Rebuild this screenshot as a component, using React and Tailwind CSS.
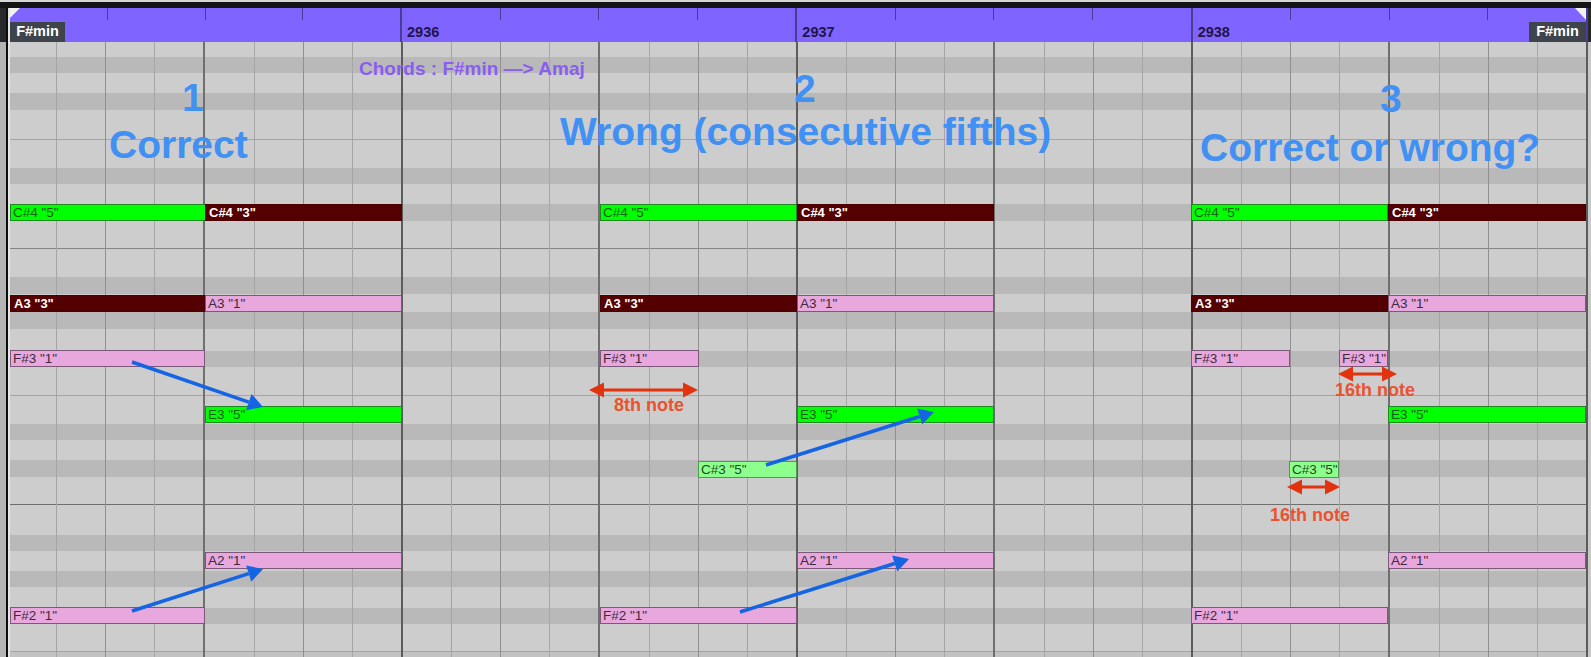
import React from "react";

const stripes = [
  "h-[15px] bg-[#cdcdcd]",
  "h-[16px] bg-[#b9b9b9]",
  "h-[20px] bg-[#cdcdcd]",
  "h-[17px] bg-[#b9b9b9]",
  "h-[30px] bg-[#cdcdcd] border-b border-b-[#a4a4a4]",
  "h-[28px] bg-[#cdcdcd]",
  "h-[16px] bg-[#b9b9b9]",
  "h-[20px] bg-[#cdcdcd]",
  "h-[17px] bg-[#b9b9b9]",
  "h-[28px] bg-[#cdcdcd] border-b border-b-[#858585]",
  "h-[28px] bg-[#cdcdcd]",
  "h-[17px] bg-[#b9b9b9]",
  "h-[18px] bg-[#cdcdcd]",
  "h-[17px] bg-[#b9b9b9]",
  "h-[22px] bg-[#cdcdcd]",
  "h-[16px] bg-[#b9b9b9]",
  "h-[29px] bg-[#cdcdcd] border-b border-b-[#a4a4a4]",
  "h-[28px] bg-[#cdcdcd]",
  "h-[16px] bg-[#b9b9b9]",
  "h-[20px] bg-[#cdcdcd]",
  "h-[17px] bg-[#b9b9b9]",
  "h-[28px] bg-[#cdcdcd] border-b border-b-[#6e6e6e]",
  "h-[30px] bg-[#cdcdcd]",
  "h-[16px] bg-[#b9b9b9]",
  "h-[20px] bg-[#cdcdcd]",
  "h-[16px] bg-[#b9b9b9]",
  "h-[21px] bg-[#cdcdcd]",
  "h-[16px] bg-[#b9b9b9]",
  "h-[28px] bg-[#cdcdcd] border-b border-b-[#a4a4a4]",
  "h-[5px] bg-[#c2c2c2]",
];

const eighth = "border-r border-r-[#a6a6a6]";
const quarter = "border-r border-r-[#909090]";
const half = "border-r border-r-[#6f6f6f]";
const afterHalf = "border-l border-l-[#6f6f6f] border-r border-r-[#a6a6a6]";
const bar = "border-r-2 border-r-[#5c5c5c]";
const barCells = [eighth, quarter, eighth, half, afterHalf, quarter, eighth, bar];

const green = "bg-[#00ff00] border-[#1f8a1f] text-[#156015] pl-[2px] text-[13.5px]";
const dark = "bg-[#550000] border-[#4a0000] text-white font-bold pl-[3px] text-[13px]";
const pink = "bg-[#e8a8de] border-[#7a5a78] text-[#3c2b3c] pl-[2px] text-[13.5px]";
const mint = "bg-[#8dff8d] border-[#4f9a4f] text-[#1c4c1c] pl-[2px] text-[13.5px]";

const notes = [
  ["C#4 \"5\"", green, "left-[0px] top-[162px] w-[196px]"],
  ["C#4 \"3\"", dark, "left-[195px] top-[162px] w-[197px]"],
  ["A3 \"3\"", dark, "left-[0px] top-[253px] w-[195px]"],
  ["A3 \"1\"", pink, "left-[195px] top-[253px] w-[197px]"],
  ["F#3 \"1\"", pink, "left-[0px] top-[308px] w-[195px]"],
  ["E3 \"5\"", green, "left-[195px] top-[364px] w-[197px]"],
  ["A2 \"1\"", pink, "left-[195px] top-[510px] w-[197px]"],
  ["F#2 \"1\"", pink, "left-[0px] top-[565px] w-[195px]"],

  ["C#4 \"5\"", green, "left-[590px] top-[162px] w-[197px]"],
  ["C#4 \"3\"", dark, "left-[787px] top-[162px] w-[197px]"],
  ["A3 \"3\"", dark, "left-[590px] top-[253px] w-[197px]"],
  ["A3 \"1\"", pink, "left-[787px] top-[253px] w-[197px]"],
  ["F#3 \"1\"", pink, "left-[590px] top-[308px] w-[99px]"],
  ["C#3 \"5\"", mint, "left-[688px] top-[419px] w-[99px]"],
  ["E3 \"5\"", green, "left-[787px] top-[364px] w-[197px]"],
  ["A2 \"1\"", pink, "left-[787px] top-[510px] w-[197px]"],
  ["F#2 \"1\"", pink, "left-[590px] top-[565px] w-[197px]"],

  ["C#4 \"5\"", green, "left-[1181px] top-[162px] w-[197px]"],
  ["C#4 \"3\"", dark, "left-[1378px] top-[162px] w-[198px]"],
  ["A3 \"3\"", dark, "left-[1181px] top-[253px] w-[197px]"],
  ["A3 \"1\"", pink, "left-[1378px] top-[253px] w-[198px]"],
  ["F#3 \"1\"", pink, "left-[1181px] top-[308px] w-[99px]"],
  ["F#3 \"1\"", pink, "left-[1329px] top-[308px] w-[49px]"],
  ["C#3 \"5\"", mint, "left-[1279px] top-[419px] w-[50px]"],
  ["E3 \"5\"", green, "left-[1378px] top-[364px] w-[198px]"],
  ["A2 \"1\"", pink, "left-[1378px] top-[510px] w-[198px]"],
  ["F#2 \"1\"", pink, "left-[1181px] top-[565px] w-[197px]"],
];

function head(x1, y1, x2, y2, len, half) {
  const d = Math.hypot(x2 - x1, y2 - y1);
  const ux = (x2 - x1) / d;
  const uy = (y2 - y1) / d;
  const bx = x2 - ux * len;
  const by = y2 - uy * len;
  return {
    bx,
    by,
    pts: `${x2},${y2} ${bx - uy * half},${by + ux * half} ${bx + uy * half},${by - ux * half}`,
  };
}

function BlueArrow({ x1, y1, x2, y2 }) {
  const h = head(x1, y1, x2, y2, 15, 8.5);
  return (
    <g>
      <line x1={x1} y1={y1} x2={h.bx} y2={h.by} stroke="#1464e4" strokeWidth="3.5" />
      <polygon points={h.pts} fill="#1464e4" />
    </g>
  );
}

function RedArrow({ x1, x2, y }) {
  return (
    <g fill="#e2330e">
      <polygon points={`${x1},${y} ${x1 + 15},${y - 7.5} ${x1 + 15},${y + 7.5}`} />
      <polygon points={`${x2},${y} ${x2 - 15},${y - 7.5} ${x2 - 15},${y + 7.5}`} />
      <line x1={x1 + 12} x2={x2 - 12} y1={y} y2={y} stroke="#e2330e" strokeWidth="3" />
    </g>
  );
}

function RulerBar({ label, wide }) {
  return (
    <div className={`${wide ? "w-[392px]" : "flex-1"} border-r-2 border-r-[#4b3d96]`}>
      <div className="flex h-[12px]">
        <div className="flex-1 border-r border-r-[#4b3d96]" />
        <div className="flex-1 border-r border-r-[#4b3d96]" />
        <div className="flex-1 border-r border-r-[#4b3d96]" />
        <div className="flex-1" />
      </div>
      {label && (
        <div className="pl-[5px] text-[14.5px] leading-[24px] font-bold text-[#1f1548]">{label}</div>
      )}
    </div>
  );
}

export default function App() {
  return (
    <div className="relative flex h-[657px] w-[1591px] flex-col overflow-hidden bg-[#c0c0c0] font-['Liberation_Sans',sans-serif]">
      <div className="h-[8px] shrink-0 border-t-2 border-t-[#d9d9d9] bg-[#151515]" />
      <div className="flex flex-1">
        <div className="flex w-[6px] flex-col">
          <div className="h-[34px] bg-[#26282b]" />
          <div className="flex-1 bg-[#b4b4b4]" />
        </div>
        <div className="w-[2px] bg-[#0c0c0c]" />
        <div className="w-[2px] bg-[#e4e4e4]" />
        <div className="relative w-[1578px]">
          <div className="flex h-[34px] bg-[#8064ff]">
            <RulerBar wide />
            <RulerBar label="2936" />
            <RulerBar label="2937" />
            <RulerBar label="2938" />
          </div>
          <div className="relative">
            <div className="flex flex-col">
              {stripes.map((c, i) => (
                <div key={i} className={c} />
              ))}
            </div>
            <div className="absolute inset-0 flex">
              <div className="w-[47px] border-r border-r-[#a6a6a6]" />
              {[...barCells.slice(1), ...barCells, ...barCells, ...barCells].map((c, i) => (
                <div key={i} className={`flex-1 ${c}`} />
              ))}
            </div>
            {notes.map(([label, tone, place], i) => (
              <div
                key={i}
                className={`absolute flex h-[17px] items-center overflow-hidden whitespace-nowrap border leading-none ${tone} ${place}`}
              >
                {label}
              </div>
            ))}
          </div>

          <div className="absolute left-0 top-[14px] flex h-[20px] w-[55px] items-center justify-center bg-[#3e444b] text-[14.5px] font-bold text-white">
            F#min
          </div>
          <div className="absolute right-[2px] top-[14px] flex h-[20px] w-[57px] items-center justify-center bg-[#3e444b] text-[14.5px] font-bold text-white">
            F#min
          </div>
        </div>
        <div className="flex w-[3px] flex-col">
          <div className="h-[34px] bg-[#26282b]" />
          <div className="flex-1 bg-[#c8c8c8]" />
        </div>
      </div>

      <svg className="absolute left-0 top-0 h-[657px] w-[1591px]" viewBox="0 0 1591 657">
        <polygon points="10,8 20,8 10,18" fill="#f2f2f2" />
        <polygon points="1575,8 1586,8 1586,20" fill="#f2f2f2" />
        <BlueArrow x1={132} y1={362} x2={263} y2={407} />
        <BlueArrow x1={132} y1={611} x2={263} y2={569} />
        <BlueArrow x1={766} y1={465} x2={934} y2={412} />
        <BlueArrow x1={740} y1={612} x2={909} y2={559} />
        <RedArrow x1={589} x2={698} y={390} />
        <RedArrow x1={1338} x2={1397} y={374} />
        <RedArrow x1={1287} x2={1340} y={487} />
      </svg>

      <div className="absolute left-[182px] top-[78px] text-[39px] font-bold leading-none text-[#4190f3]">1</div>
      <div className="absolute left-[109px] top-[125px] text-[39px] font-bold leading-none text-[#4190f3]">Correct</div>
      <div className="absolute left-[794px] top-[69px] text-[39px] font-bold leading-none text-[#4190f3]">2</div>
      <div className="absolute left-[560px] top-[112px] whitespace-nowrap text-[39px] font-bold leading-none text-[#4190f3]">Wrong (consecutive fifths)</div>
      <div className="absolute left-[1380px] top-[79px] text-[39px] font-bold leading-none text-[#4190f3]">3</div>
      <div className="absolute left-[1200px] top-[128px] whitespace-nowrap text-[39px] font-bold leading-none text-[#4190f3]">Correct or wrong?</div>
      <div className="absolute left-[359px] top-[59px] whitespace-nowrap text-[19px] font-bold leading-none text-[#8a5df0]">Chords : F#min —&gt; Amaj</div>
      <div className="absolute left-[614px] top-[396px] whitespace-nowrap text-[18px] font-bold leading-none text-[#ea5230]">8th note</div>
      <div className="absolute left-[1335px] top-[381px] whitespace-nowrap text-[18px] font-bold leading-none text-[#ea5230]">16th note</div>
      <div className="absolute left-[1270px] top-[506px] whitespace-nowrap text-[18px] font-bold leading-none text-[#ea5230]">16th note</div>
    </div>
  );
}
